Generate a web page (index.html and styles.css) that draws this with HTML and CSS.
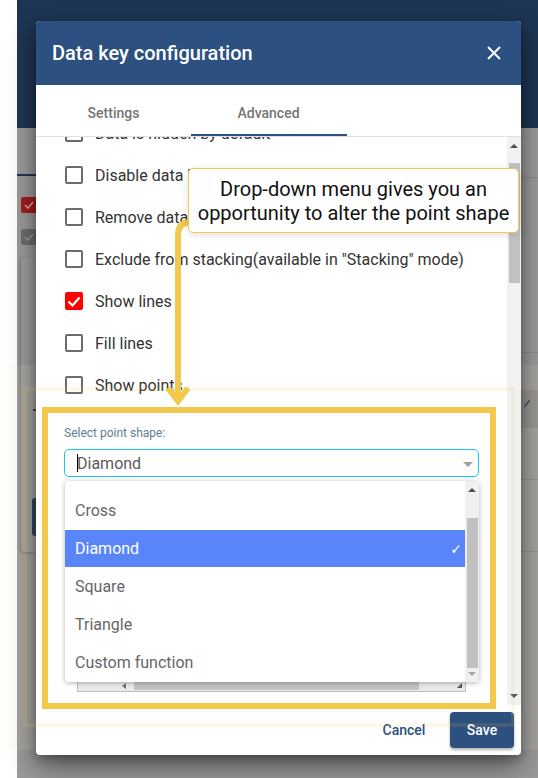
FILE: index.html
```html
<!DOCTYPE html>
<html lang="en">
<head>
<meta charset="utf-8">
<title>Data key configuration</title>
<link rel="stylesheet" href="styles.css">
</head>
<body>
<div class="screen">
  <div class="gutter"></div>
  <div class="page">
    <div class="page-top"></div>
    <div class="page-rest">
      <div class="bg-left">
        <div class="bg-line"></div>
        <div class="bg-check red"><svg width="10" height="8" viewBox="0 0 10 8"><path d="M1 4l3 3 5-6" fill="none" stroke="#d9a3a3" stroke-width="1.6"/></svg></div>
        <div class="bg-check grey"><svg width="10" height="8" viewBox="0 0 10 8"><path d="M1 4l3 3 5-6" fill="none" stroke="#9a9a9a" stroke-width="1.6"/></svg></div>
        <div class="bg-card"><span class="bg-mark"></span><div class="bg-btn"></div></div>
      </div>
      <div class="bg-right">
        <div class="r-gap g1"></div>
        <div class="r-line"></div>
        <div class="r-gap g2"></div>
        <div class="r-line"></div>
        <div class="r-gap g3"></div>
        <div class="r-band"><svg width="8" height="10" viewBox="0 0 8 10"><path d="M1 9l1-3 4-5 1 1-4 5z" fill="#333"/></svg></div>
        <div class="r-gap g4"></div>
        <div class="r-line"></div>
        <div class="r-gap g5"></div>
        <div class="r-line"></div>
      </div>
    </div>
  </div>
</div>

<div class="glow"></div>

<div class="dialog">
  <div class="dlg-head">
    <div class="dlg-title">Data key configuration</div>
    <svg class="close" width="14" height="14" viewBox="0 0 14 14"><path d="M1 1l12 12M13 1L1 13" stroke="#fff" stroke-width="2"/></svg>
  </div>
  <div class="tabs">
    <div class="tab">Settings</div>
    <div class="tab active">Advanced</div>
  </div>
  <div class="dlg-body">
    <div class="content">
      <div class="opts">
        <div class="opt"><span class="box"></span>Data is hidden by default</div>
        <div class="opt"><span class="box"></span>Disable data highlight</div>
        <div class="opt"><span class="box"></span>Remove data from legend</div>
        <div class="opt"><span class="box"></span>Exclude from stacking(available in "Stacking" mode)</div>
        <div class="opt"><span class="box checked"><svg width="14" height="11" viewBox="0 0 14 11"><path d="M1.5 5.5l4 4 7-8" fill="none" stroke="#fff" stroke-width="2.2"/></svg></span>Show lines</div>
        <div class="opt"><span class="box"></span>Fill lines</div>
        <div class="opt"><span class="box"></span>Show points</div>
      </div>
      <div class="shape-section">
        <div class="shape-label">Select point shape:</div>
        <div class="select-wrap">
          <div class="select"><span class="caret"></span>Diamond<span class="sel-arrow"></span></div>
          <div class="dropdown">
            <div class="dd-list">
              <div class="dd-item">Cross</div>
              <div class="dd-item sel">Diamond<span class="tick">✓</span></div>
              <div class="dd-item">Square</div>
              <div class="dd-item">Triangle</div>
              <div class="dd-item">Custom function</div>
            </div>
            <div class="dd-scroll">
              <span class="tri-up"></span>
              <span class="dd-thumb"></span>
              <span class="tri-down light"></span>
            </div>
          </div>
        </div>
        <div class="hscroll">
          <span class="tri-left"></span>
          <span class="h-thumb"></span>
          <span class="h-corner"></span>
        </div>
      </div>
    </div>
    <div class="vscroll">
      <span class="tri-up"></span>
      <span class="v-thumb"></span>
      <span class="tri-down"></span>
    </div>
  </div>
  <div class="dlg-foot">
    <button class="btn-cancel">Cancel</button>
    <button class="btn-save">Save</button>
  </div>
</div>

<div class="outer-frame"></div>
<div class="hl-frame"></div>

<svg class="pointer" width="538" height="778" viewBox="0 0 538 778">
  <path d="M191 222 Q178 222 178 235 L178 398" fill="none" stroke="#f2c94c" stroke-width="6"/>
  <path d="M168 388 L178 401 L188 388" fill="none" stroke="#f2c94c" stroke-width="6" stroke-linejoin="miter"/>
</svg>

<div class="tooltip">Drop-down menu gives you an<br>opportunity to alter the point shape</div>
</body>
</html>
```

FILE: styles.css
```css
* { box-sizing: border-box; margin: 0; padding: 0; }
html, body { width: 538px; height: 778px; overflow: hidden; }
body { font-family: Roboto, "Noto Sans", Arial, sans-serif; background: #fff; position: relative; }

.screen { display: flex; height: 778px; }
.gutter { width: 17px; background: #fff; }
.page { flex: 1; display: flex; flex-direction: column; }
.page-top { height: 128px; background: #1e3553; }
.page-rest { flex: 1; background: #9a9a9a; display: flex; justify-content: space-between; }

.bg-left { width: 19px; display: flex; flex-direction: column; }
.bg-line { margin-top: 46px; height: 2px; background: #1e3553; }
.bg-check { width: 16px; height: 16px; margin-left: 4px; border-radius: 2px; display: flex; align-items: center; justify-content: center; }
.bg-check.red { margin-top: 21px; background: #a41c1c; }
.bg-check.grey { margin-top: 16px; background: #6e6e6e; }
.bg-card { margin-top: 12px; margin-left: 4px; height: 295px; background: #9d9d9d; border-radius: 4px 0 0 4px; box-shadow: -1px 1px 3px rgba(0,0,0,.25); display: flex; flex-direction: column; align-items: flex-end; }
.bg-mark { margin-top: 152px; width: 3px; height: 2px; background: #333; margin-right: 0; }
.bg-btn { margin-top: 87px; width: 4px; height: 38px; background: #1e3553; border-radius: 3px 0 0 3px; }

.bg-right { width: 17px; display: flex; flex-direction: column; }
.r-line { height: 1px; background: #8a8a8a; }
.r-gap.g1 { height: 49px; }
.r-gap.g2 { height: 174px; }
.r-gap.g3 { height: 37px; }
.r-gap.g4 { height: 51px; }
.r-gap.g5 { height: 71px; }
.r-band { height: 38px; background: #8d8d8d; display: flex; align-items: flex-start; padding: 9px 0 0 2px; }

.glow { position: absolute; left: 0; top: 365px; width: 538px; height: 385px; background: rgba(255, 248, 215, 0.10); }

.dialog { position: absolute; left: 36px; top: 21px; width: 485px; height: 734px; background: #fff; border-radius: 4px; box-shadow: 0 12px 28px rgba(0,0,0,.45), 0 4px 10px rgba(0,0,0,.25); display: flex; flex-direction: column; overflow: hidden; }
.dlg-head { height: 64px; flex: none; background: #2c5080; color: #fff; display: flex; align-items: center; justify-content: space-between; padding: 0 20px 0 16px; }
.dlg-title { font-size: 20px; font-weight: 500; }

.tabs { height: 52px; flex: none; display: flex; border-bottom: 1px solid #e0e0e0; }
.tab { width: 155px; display: flex; align-items: center; justify-content: center; padding-top: 4px; font-size: 14px; font-weight: 500; color: #757575; position: relative; }
.tab.active::after { content: ""; position: absolute; left: 0; right: -1px; bottom: 0; height: 2px; background: #2c5080; }

.dlg-body { flex: 1; display: flex; min-height: 0; }
.content { flex: 1; overflow: hidden; }

.opts { margin-top: -25px; }
.opt { height: 42px; display: flex; align-items: center; padding-left: 29px; font-size: 16px; color: #333; white-space: nowrap; }
.box { width: 18px; height: 18px; border: 2px solid #6b6b6b; border-radius: 2px; margin-right: 12px; flex: none; display: flex; align-items: center; justify-content: center; }
.box.checked { background: #ff0000; border-color: #ff0000; }

.shape-section { padding: 20px 28px 0 28px; }
.shape-label { font-size: 12px; line-height: 14px; color: #5f7e90; }
.select-wrap { position: relative; margin-top: 9px; }
.select { height: 28px; border: 1.5px solid #1ec3f5; border-radius: 5px; display: flex; align-items: center; padding-left: 12px; font-size: 16px; color: #5a5a5a; }
.caret { width: 1px; height: 18px; background: #000; margin-right: -1px; }
.sel-arrow { margin-left: auto; margin-right: 5px; margin-top: 2px; width: 0; height: 0; border-left: 5px solid transparent; border-right: 5px solid transparent; border-top: 5px solid #a0a0a0; }

.dropdown { position: absolute; left: 1px; top: 32px; width: 414px; height: 201px; background: #fff; border-radius: 3px; box-shadow: 0 1px 5px rgba(0,0,0,.3); display: flex; overflow: hidden; z-index: 2; }
.dd-list { flex: 1; padding-top: 10px; }
.dd-item { height: 38px; display: flex; align-items: center; padding-left: 10px; font-size: 16px; color: #666; }
.dd-item.sel { background: #5a85f8; color: #fff; justify-content: space-between; padding-right: 3px; margin-top: 1px; height: 37px; }
.tick { font-family: "DejaVu Sans", sans-serif; font-size: 14px; }
.dd-scroll { width: 14px; background: #f0f0f0; display: flex; flex-direction: column; align-items: center; }
.dd-thumb { margin-top: 26px; width: 11px; height: 150px; background: #c1c1c1; }

.tri-up { margin-top: 7px; width: 0; height: 0; border-left: 4px solid transparent; border-right: 4px solid transparent; border-bottom: 4px solid #505050; }
.tri-down { margin-top: auto; margin-bottom: 7px; width: 0; height: 0; border-left: 4px solid transparent; border-right: 4px solid transparent; border-top: 4px solid #505050; }
.tri-down.light { border-top-color: #a8a8a8; margin-bottom: 6px; }

.hscroll { margin: 203px 0 0 13px; width: 389px; height: 12px; background: #e9e9e9; border: 1px solid #bdbdbd; border-top: none; display: flex; align-items: center; }
.tri-left { margin-left: 44px; width: 0; height: 0; border-top: 3px solid transparent; border-bottom: 3px solid transparent; border-right: 4px solid #707070; }
.h-thumb { margin-left: 8px; width: 285px; height: 9px; background: #c4c4c4; }
.h-corner { margin-left: auto; margin-right: 3px; width: 0; height: 0; border-left: 5px solid transparent; border-bottom: 5px solid #555; }

.vscroll { width: 14px; background: #f1f1f1; display: flex; flex-direction: column; align-items: center; }
.v-thumb { margin-top: 15px; width: 11px; height: 120px; background: #c1c1c1; }

.dlg-foot { height: 50px; flex: none; display: flex; align-items: center; justify-content: flex-end; gap: 14px; padding-right: 7px; }
.dlg-foot button { width: 64px; height: 36px; border: none; font-family: Roboto, sans-serif; font-size: 14px; font-weight: 500; border-radius: 4px; }
.btn-cancel { background: transparent; color: #2c5080; }
.btn-save { background: #2c5080; color: #fff; box-shadow: 0 2px 3px rgba(0,0,0,.3); }

.outer-frame { position: absolute; left: 23px; top: 387px; width: 492px; height: 340px; border: 4px solid rgba(242, 201, 76, 0.12); }
.hl-frame { position: absolute; left: 42px; top: 407px; width: 454px; height: 302px; border: 6px solid #f2c94c; }

.pointer { position: absolute; left: 0; top: 0; pointer-events: none; }

.tooltip { position: absolute; left: 188px; top: 168px; width: 331px; height: 65px; background: #fff; border: 1px solid #f2c94c; border-radius: 5px; box-shadow: 0 2px 8px rgba(0,0,0,.12); padding-top: 8px; text-align: center; font-size: 20px; line-height: 24px; color: #111; white-space: nowrap; }
```
